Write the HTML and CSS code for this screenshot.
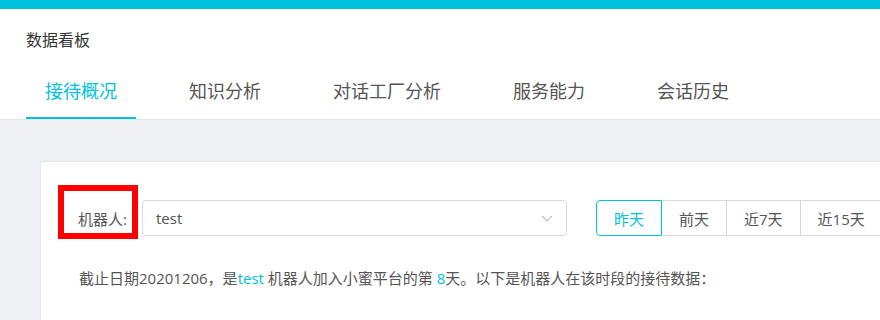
FILE: index.html
```html
<!DOCTYPE html>
<html lang="zh-CN">
<head>
    <meta charset="UTF-8">
    <meta name="viewport" content="width=device-width, initial-scale=1.0">
    <title>数据看板</title>
    <link rel="stylesheet" href="styles.css">
</head>
<body>

    <div class="top-bar"></div>

    <div class="header">
        <div class="page-title">数据看板</div>
        <div class="tabs">
            <a class="tab active" href="#">接待概况</a>
            <a class="tab" href="#">知识分析</a>
            <a class="tab" href="#">对话工厂分析</a>
            <a class="tab" href="#">服务能力</a>
            <a class="tab" href="#">会话历史</a>
        </div>
    </div>

    <div class="main">
        <div class="card">
            <!-- cadre rouge d'annotation -->
            <div class="mark"></div>

            <div class="filter-row">
                <span class="filter-label">机器人:</span>
                <div class="select">
                    <span>test</span>
                    <svg class="arrow" width="12" height="7" viewBox="0 0 12 7">
                        <path d="M1 1 L6 6 L11 1" fill="none" stroke="#bfbfbf" stroke-width="1.2"/>
                    </svg>
                </div>
                <div class="range-group">
                    <button class="range active">昨天</button>
                    <button class="range">前天</button>
                    <button class="range">近7天</button>
                    <button class="range">近15天</button>
                </div>
            </div>

            <p class="summary">截止日期20201206，是<span class="hl">test</span> 机器人加入小蜜平台的第 <span class="hl">8</span>天。以下是机器人在该时段的接待数据：</p>
        </div>
    </div>

</body>
</html>
```

FILE: styles.css
```css
body {
    margin: 0;
    padding: 0;
    background-color: #eff0f4;
    font-family: "Open Sans", "Noto Sans CJK SC", sans-serif;
    color: #555;
    overflow: hidden;
}

.top-bar {
    height: 9px;
    background-color: #00c1de;
}

.header {
    background-color: #fff;
    border-bottom: 1px solid #e3e3e3;
    padding-left: 26px;
}

.page-title {
    font-size: 16px;
    color: #333;
    line-height: 22px;
    padding-top: 20px;
}

.tabs {
    display: flex;
    gap: 34px;
    margin-top: 27px;
}

.tab {
    display: block;
    padding: 0 19px;
    font-size: 18px;
    line-height: 26px;
    height: 39px;
    color: #555;
    text-decoration: none;
    border-bottom: 2px solid transparent;
}

.tab.active {
    color: #00c1de;
    border-bottom-color: #00c1de;
}

.main {
    padding: 41px 0 0 40px;
}

.card {
    position: relative;
    width: 1100px;
    height: 300px;
    background-color: #fff;
    border: 1px solid #e6e6e6;
    border-radius: 3px;
    padding: 38px 0 0 37px;
}

.mark {
    position: absolute;
    left: 17px;
    top: 23px;
    width: 80px;
    height: 54px;
    border: 6px solid #ff0000;
    box-sizing: border-box;
}

.filter-row {
    display: flex;
    align-items: center;
}

.filter-label {
    width: 56px;
    font-size: 15px;
    color: #555;
    margin-right: 8px;
}

.select {
    width: 425px;
    height: 36px;
    border: 1px solid #d9d9d9;
    border-radius: 4px;
    display: flex;
    align-items: center;
    justify-content: space-between;
    padding: 0 13px;
    box-sizing: border-box;
    font-size: 15px;
    color: #555;
    margin-right: 29px;
}

.range-group {
    display: flex;
}

.range {
    height: 36px;
    padding: 0 17px;
    border: 1px solid #d9d9d9;
    border-left: none;
    background-color: #fff;
    font-family: inherit;
    font-size: 15px;
    color: #555;
    white-space: nowrap;
}

.range:first-child {
    border-left: 1px solid #d9d9d9;
    border-radius: 4px 0 0 4px;
}

.range.active {
    border: 1px solid #00c1de;
    color: #00c1de;
}

.summary {
    margin: 31px 0 0 1px;
    font-size: 15px;
    color: #555;
    line-height: 22px;
}

.hl {
    color: #00c1de;
}
```
